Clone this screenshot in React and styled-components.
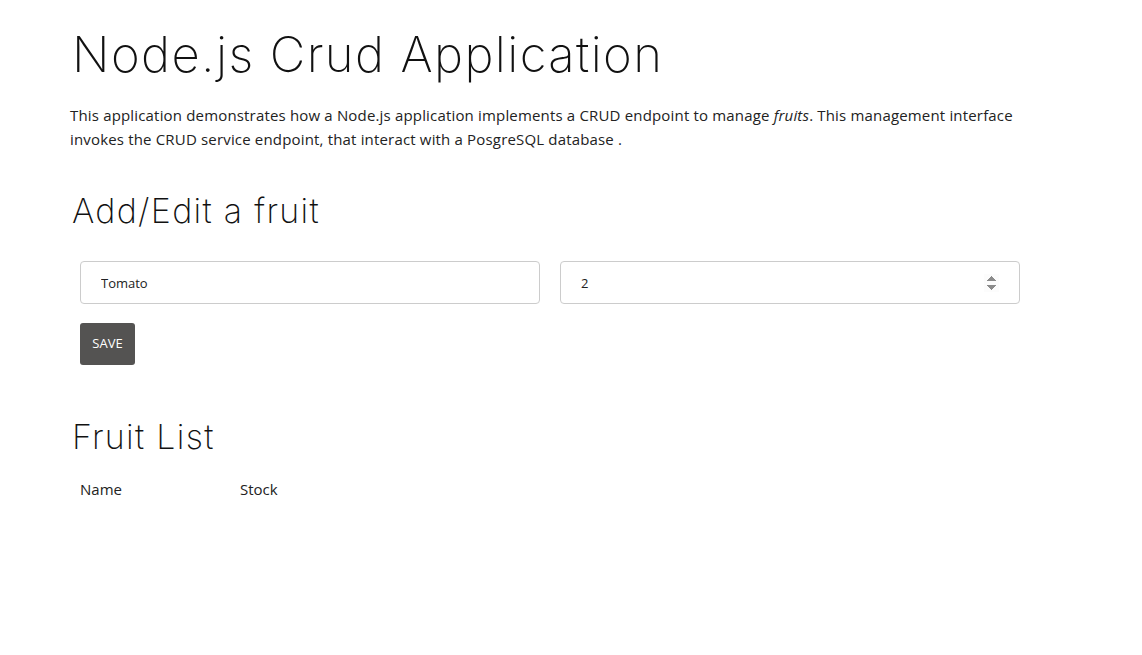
import React, { useState } from "react";
import styled, { createGlobalStyle } from "styled-components";

const GlobalStyle = createGlobalStyle`
  body {
    margin: 0;
    background: #fff;
    color: #222;
    font-family: "Open Sans", "Liberation Sans", sans-serif;
  }
`;

const App = () => {
  const [name, setName] = useState("Tomato");
  const [stock, setStock] = useState("2");

  return (
    <>
      <GlobalStyle />
      <Page>
        <Title>Node.js Crud Application</Title>
        <Intro>
          This application demonstrates how a Node.js application implements a
          CRUD endpoint to manage <em>fruits</em>. This management interface
          invokes the CRUD service endpoint, that interact with a PosgreSQL
          database .
        </Intro>

        <SectionTitle $top={38}>Add/Edit a fruit</SectionTitle>
        <FormRow>
          <Field>
            <Input
              type="text"
              value={name}
              onChange={(e) => setName(e.target.value)}
            />
          </Field>
          <Field>
            <Input
              type="number"
              value={stock}
              autoFocus
              onChange={(e) => setStock(e.target.value)}
            />
          </Field>
        </FormRow>
        <SaveButton>SAVE</SaveButton>

        <SectionTitle $top={50}>Fruit List</SectionTitle>
        <Table>
          <thead>
            <tr>
              <Th>Name</Th>
              <Th>Stock</Th>
            </tr>
          </thead>
          <tbody></tbody>
        </Table>
      </Page>
    </>
  );
};

const Page = styled.div`
  width: 960px;
  padding: 0 70px;
`;

const Title = styled.h1`
  margin: 24px 0 0 2px;
  font-family: Inter, "Liberation Sans", sans-serif;
  font-weight: 200;
  font-size: 49px;
  line-height: 62px;
  letter-spacing: 1.4px;
  color: #111;
`;

const Intro = styled.p`
  margin: 17px 0 0;
  font-size: 15px;
  line-height: 24px;
  letter-spacing: 0.17px;
  color: #222;
  em {
    font-style: italic;
  }
`;

const SectionTitle = styled.h2`
  margin: ${(p) => p.$top}px 0 0 2px;
  font-family: Inter, "Liberation Sans", sans-serif;
  font-weight: 200;
  font-size: 34px;
  line-height: 44px;
  letter-spacing: 1.3px;
  color: #111;
`;

const FormRow = styled.div`
  display: flex;
  margin-top: 28px;
`;

const Field = styled.div`
  flex: 1;
  padding: 0 10px;
`;

const Input = styled.input`
  box-sizing: border-box;
  width: 100%;
  height: 43px;
  padding: 0 20px;
  border: 1px solid #ccc;
  border-radius: 4px;
  font-family: "Open Sans", "Liberation Sans", sans-serif;
  font-size: 13px;
  color: #222;
  background: #fff;
  outline: none;
`;

const SaveButton = styled.button`
  display: block;
  margin: 19px 0 0 10px;
  width: 55px;
  height: 42px;
  padding: 0 0 2px;
  border: none;
  border-radius: 3px;
  background: #545352;
  color: #fff;
  font-family: "Open Sans", "Liberation Sans", sans-serif;
  font-size: 13px;
  line-height: 38px;
  cursor: pointer;
`;

const Table = styled.table`
  margin-top: 14px;
  border-collapse: collapse;
`;

const Th = styled.th`
  width: 140px;
  padding: 6px 10px;
  text-align: left;
  font-weight: 400;
  font-size: 15px;
  color: #222;
`;

export default App;
